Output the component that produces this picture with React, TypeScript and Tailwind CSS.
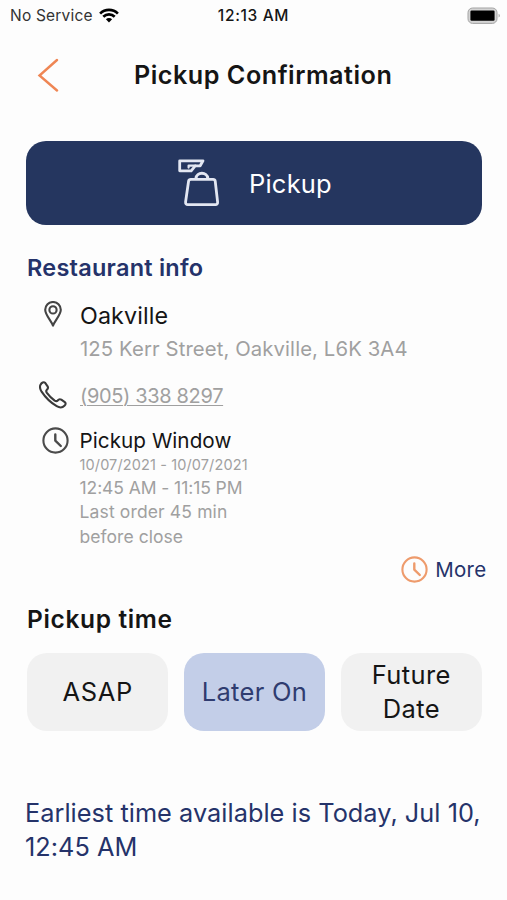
import React from "react";

function Wifi() {
  return (
    <svg width="20" height="15" viewBox="0 0 20 15" fill="none" stroke="#000" strokeWidth="2.7">
      <path d="M1.1 5.6a12.6 12.6 0 0 1 17.8 0" />
      <path d="M4.3 8.8a8.1 8.1 0 0 1 11.4 0" />
      <path d="M10 14.5 6.9 11.3a4.4 4.4 0 0 1 6.2 0Z" fill="#000" stroke="none" />
    </svg>
  );
}

function Battery() {
  return (
    <svg width="34" height="18" viewBox="0 0 34 18">
      <rect x="1" y="1" width="29" height="15.4" rx="4.6" fill="#d4d4d4" stroke="#a3a3a3" />
      <rect x="3.4" y="3.6" width="24.2" height="10.2" rx="1.2" fill="#000" />
      <path d="M31.6 6.8c1.6.6 1.6 3.2 0 3.8Z" fill="#a3a3a3" />
    </svg>
  );
}

function BagIcon() {
  return (
    <svg width="43" height="50" viewBox="0 0 43 50" fill="none" stroke="#e3e7f2" strokeWidth="2.8" strokeLinejoin="round" strokeLinecap="round">
      <path d="M2.7 2.800H26L23.200 7.800H18.200L14.200 12.800H2.700Z" />
      <path d="M18.400 7.600H11.600V9.600" strokeWidth="2.200" />
      <path d="M19 20.400c.4-6.800 11.400-6.800 11.800 0" strokeWidth="3" />
      <path d="M13.800 21.400H36.200c1.200 0 1.800.6 2 1.600l2.400 20.800c.2 1.800-.6 2.800-2.200 2.800H10.800c-1.600 0-2.400-1-2.200-2.800l3-20.800c.2-1 1-1.600 2.200-1.600Z" />
    </svg>
  );
}

function PinIcon() {
  return (
    <svg width="18" height="26" viewBox="0 0 18 26" fill="none" stroke="#444" strokeWidth="2.100" strokeLinejoin="round">
      <path d="M9 24.600C7.600 20.400 1.200 14 1.200 8.800a7.800 7.800 0 0 1 15.600 0C16.800 14 10.400 20.400 9 24.600Z" />
      <circle cx="9" cy="8.900" r="3.600" />
    </svg>
  );
}

function PhoneIcon() {
  return (
    <svg width="28" height="28" viewBox="0 0 28 28" fill="none" stroke="#3a3a3a" strokeWidth="2.100" strokeLinejoin="round">
      <path d="M1.400 3.900C2.600 1.600 4.800.600 6 1.700L8.600 5.400C9.400 6.700 8.900 7.900 7.700 8.900 6.900 9.700 7.100 10.700 7.900 11.900 10 14.800 12.600 17.400 15.700 19.600 16.900 20.400 17.900 20.400 18.700 19.500 19.700 18.200 21 17.900 22.300 18.700L25.800 21.100C27 22 26.800 23.400 25.400 24.800 23.200 27 20.600 26.900 17.700 25.200 11.600 21.700 6.600 16.700 2.600 10.700.900 8 .600 5.700 1.400 3.900Z" />
    </svg>
  );
}

function ClockIcon({ color }: { color: string }) {
  return (
    <svg width="27" height="27" viewBox="0 0 27 27" fill="none" stroke={color} strokeWidth="2.100">
      <circle cx="13.500" cy="13.500" r="12.100" />
      <path d="M13.300 7.400V13.600L18.800 19" strokeWidth="2.400" strokeLinecap="round" strokeLinejoin="round" />
    </svg>
  );
}

export default function App() {
  return (
    <main className="h-[900px] w-[507px] overflow-hidden whitespace-nowrap bg-[#fdfdfd] font-['Inter','Liberation_Sans',sans-serif] text-[#151515]">
      <div className="grid h-[30px] grid-cols-[1fr_auto_1fr] items-center text-[15.5px] leading-[30px]">
        <div className="flex items-center gap-[6px] pl-[10px] text-[#333]">
          <span className="tracking-[0.2px]">No Service</span>
          <Wifi />
        </div>
        <span className="pt-px font-medium tracking-[0.65px]">12:13 AM</span>
        <div className="flex justify-end pr-[6px]">
          <Battery />
        </div>
      </div>

      <header className="flex h-[90px] items-center pl-[37px]">
        <svg width="22" height="34" viewBox="0 0 22 34" fill="none" stroke="#ef8654" strokeWidth="2.400" strokeLinecap="round">
          <path d="M20 2 2.500 17.500 20 32.500" />
        </svg>
        <h1 className="ml-[75px] text-[25.200px] font-semibold leading-8 tracking-[0.500px]">Pickup Confirmation</h1>
      </header>

      <button className="ml-[26px] mt-[20.500px] flex h-[84.500px] w-[456px] items-center rounded-[20px] bg-[#25365f] pl-[151px] text-[25.500px] text-white">
        <BagIcon />
        <span className="ml-[29px] pt-[3px] tracking-[0.200px]">Pickup</span>
      </button>

      <section className="pl-[27px] pt-[26.500px]">
        <h2 className="text-[23.500px] font-semibold leading-8 tracking-[0.240px] text-[#25336a]">Restaurant info</h2>
        <div className="mt-[14px] flex">
          <div className="flex w-[53px] justify-start pl-[17px] pt-[3px]">
            <PinIcon />
          </div>
          <div>
            <p className="text-[23.300px] leading-[36px] tracking-[0.100px]">Oakville</p>
            <p className="-mt-px text-[20.300px] leading-[32px] tracking-[0.110px] text-[#a0a0a0]">125 Kerr Street, Oakville, L6K 3A4</p>
          </div>
        </div>
        <div className="mt-[14.500px] flex h-[32px] items-center">
          <div className="w-[53px] pl-[12px]">
            <PhoneIcon />
          </div>
          <a className="pt-px text-[20px] leading-[32px] tracking-[-0.350px] text-[#a0a0a0] underline decoration-1 underline-offset-2">(905) 338 8297</a>
        </div>
        <div className="mt-[16px] flex">
          <div className="w-[52.500px] pl-[15px]">
            <ClockIcon color="#4b4b4b" />
          </div>
          <div className="pt-px text-[17.500px] leading-[24.300px] text-[#a0a0a0]">
            <p className="text-[20.700px] leading-[26px] tracking-[0.040px] text-[#151515]">Pickup Window</p>
            <p className="text-[14.500px] leading-[22px] tracking-[0.120px]">10/07/2021 - 10/07/2021</p>
            <p className="tracking-[-0.080px]">12:45 AM - 11:15 PM</p>
            <p className="tracking-[0.140px]">Last order 45 min</p>
            <p className="tracking-[0.050px]">before close</p>
          </div>
        </div>
      </section>

      <div className="mt-[7px] flex items-center justify-end gap-[7.500px] pr-[20.500px] text-[20.500px] leading-[28px] tracking-[0.300px] text-[#25336a]">
        <ClockIcon color="#ee9b6c" />
        <span>More</span>
      </div>

      <section className="pl-[27px] pt-[19.500px]">
        <h2 className="text-[24.500px] font-semibold leading-[32px] tracking-[0.650px]">Pickup time</h2>
        <div className="mt-[18px] grid w-[455px] grid-cols-3 gap-[15.500px] text-center text-[25.500px] leading-[34.500px]">
          <button className="h-[78px] rounded-[20px] bg-[#f1f1f1] tracking-[0.600px]">ASAP</button>
          <button className="h-[78px] rounded-[20px] bg-[#c3cee8] tracking-[0.300px] text-[#2f3c70]">Later On</button>
          <button className="h-[78px] rounded-[20px] bg-[#f1f1f1] tracking-[0.400px]">Future<br />Date</button>
        </div>
      </section>

      <p className="pl-[25px] pt-[64.500px] text-[25.300px] leading-[34.500px] tracking-[0.040px] text-[#25336a]">
        Earliest time available is Today, Jul 10,
        <br />
        12:45 AM
      </p>
    </main>
  );
}
